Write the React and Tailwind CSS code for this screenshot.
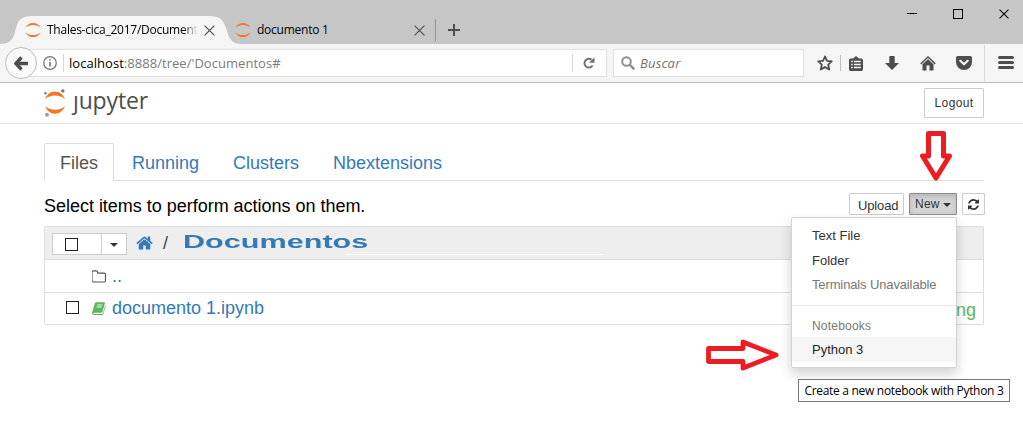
import React from "react";

const ui = "font-['Open_Sans','Noto_Sans',sans-serif]";

function Moons({ className }) {
  return (
    <svg className={className} viewBox="0 0 16 16">
      <path d="M0.6 5.6C2 2.4 4.8.9 8 .9s6 1.5 7.4 4.7C13.600 3.900 11 3 8 3S2.400 3.900.6 5.600z" fill="#f37726" />
      <path d="M0.600 10.400C2 13.600 4.800 15.100 8 15.100s6-1.500 7.400-4.700C13.600 12.100 11 13 8 13s-5.600-.9-7.400-2.600z" fill="#f37726" />
    </svg>
  );
}

function Cross({ className, color = "#4d4d4d" }) {
  return (
    <svg className={className} viewBox="0 0 11 11">
      <path d="M.6.6l9.800 9.800M10.400.6L.6 10.400" stroke={color} strokeWidth="1.150" />
    </svg>
  );
}

function TitleBar() {
  return (
    <div className="flex h-[44px] bg-[#c6c6c6]">
      <div className="relative mt-[16px] flex h-[28px] w-[226px] shrink-0 items-center pl-[25px]">
        <svg className="absolute left-0 top-0 h-[28px] w-[241px]" viewBox="0 0 241 28">
          <path d="M0 28c9 0 13-4 15-12C17.500 5 20 0 32 0h178c11 0 14 5 17 15 2.500 9 6 13 14 13z" fill="#f5f5f5" />
        </svg>
        <Moons className="relative h-[16px] w-[16px] shrink-0" />
        <span className={`relative ml-[6px] w-[151px] whitespace-nowrap text-[12px] tracking-[-0.25px] text-black ${ui} [mask-image:linear-gradient(to_right,black_90%,transparent)]`}>
          Thales-cica_2017/Document
        </span>
        <Cross className="relative ml-[6px] h-[11px] w-[11px] shrink-0" />
      </div>
      <div className="relative mt-[16px] flex h-[28px] w-[209px] items-center pl-[9px]">
        <Moons className="h-[16px] w-[16px]" />
        <span className={`ml-[6px] flex-1 text-[12px] tracking-[-0.25px] text-black ${ui}`}>documento 1</span>
        <Cross className="mr-[10px] h-[11px] w-[11px]" />
      </div>
      <div className="mt-[19px] h-[22px] w-px bg-[#969696]" />
      <svg className="ml-[12px] mt-[24px] h-[12px] w-[12px]" viewBox="0 0 12 12">
        <path d="M6 0v12M0 6h12" stroke="#4d4d4d" strokeWidth="2" />
      </svg>
      <div className="ml-auto mr-[14px] mt-[9px] flex h-[10px] gap-[36px]">
        <div className="mt-[4px] h-px w-[10px] bg-black" />
        <div className="h-[10px] w-[10px] border border-black" />
        <Cross className="h-[10px] w-[10px]" color="#000" />
      </div>
    </div>
  );
}

function Toolbar() {
  return (
    <div className="flex h-[39px] items-start border-b border-[#bdbdbd] bg-[#f5f5f5] pt-[5px]">
      <div className="relative z-10 ml-[5px] mt-[-2px] flex h-[32px] w-[32px] shrink-0 items-center justify-center rounded-full border border-[#bdbdbd] bg-[#fafafa]">
        <svg className="h-[15px] w-[15px]" viewBox="0 0 15 15">
          <path d="M7.500 1.500L1.800 7.500l5.700 6M2.500 7.500H14" fill="none" stroke="#4d4d4d" strokeWidth="3.400" />
        </svg>
      </div>
      <div className="ml-[-12px] flex h-[28px] w-[582px] items-center border border-[#e0e0e0] bg-white pl-[17px]">
        <svg className="h-[14px] w-[14px]" viewBox="0 0 14 14">
          <circle cx="7" cy="7" r="6.300" fill="none" stroke="#737373" strokeWidth="1.200" />
          <path d="M7 6v4.500M7 3.200v1.600" stroke="#737373" strokeWidth="1.600" />
        </svg>
        <div className="ml-[6px] h-[18px] w-px bg-[#d8d8d8]" />
        <span className={`ml-[5px] mt-[2px] whitespace-nowrap text-[13px] tracking-[0.04px] text-[#7b7b7b] ${ui}`}>
          <span className="text-black">localhost</span>:8888/tree/'Documentos#
        </span>
        <div className="ml-auto h-[18px] w-px bg-[#d8d8d8]" />
        <svg className="ml-[10px] mr-[11px] h-[12px] w-[12px]" viewBox="0 0 12 12">
          <path d="M9.600 8.500A4.400 4.400 0 1 1 8.600 2.700" fill="none" stroke="#737373" strokeWidth="2" />
          <path d="M11.500.3v5.500H6z" fill="#737373" />
        </svg>
      </div>
      <div className="ml-[6px] flex h-[28px] w-[191px] items-center border border-[#e0e0e0] bg-white pl-[7px]">
        <svg className="h-[14px] w-[14px]" viewBox="0 0 14 14">
          <circle cx="5.500" cy="5.500" r="4.300" fill="none" stroke="#8c8c8c" strokeWidth="1.900" />
          <path d="M8.500 8.500l4.800 4.800" stroke="#8c8c8c" strokeWidth="2.400" />
        </svg>
        <span className={`ml-[5px] mt-[2px] text-[13px] italic tracking-[0.2px] text-[#737373] ${ui}`}>Buscar</span>
      </div>
      <div className="flex h-[28px] items-center pl-[13px]">
        <svg className="h-[16px] w-[16px]" viewBox="0 0 16 16">
          <path d="M8 1.500l2 4.400 4.700.5-3.500 3.300 1 4.800L8 12.100l-4.200 2.400 1-4.800L1.300 6.400 6 5.900z" fill="none" stroke="#4d4d4d" strokeWidth="1.800" strokeLinejoin="round" />
        </svg>
        <div className="ml-[7px] h-[16px] w-px bg-[#bdbdbd]" />
        <svg className="ml-[8px] h-[15px] w-[14px]" viewBox="0 0 14 15">
          <path d="M4 2.500L7 0l3 2.500h2.200A1.800 1.800 0 0 1 14 4.300v8.900a1.800 1.800 0 0 1-1.800 1.800H1.800A1.800 1.800 0 0 1 0 13.200V4.300a1.800 1.800 0 0 1 1.800-1.800z" fill="#4d4d4d" />
          <path d="M2.200 5.600h1.600M5 5.600h6.800M2.200 8.600h1.600M5 8.600h6.800M2.200 11.600h1.600M5 11.600h6.800" stroke="#f5f5f5" strokeWidth="1.500" />
        </svg>
        <svg className="ml-[22px] h-[14px] w-[14px]" viewBox="0 0 14 14">
          <path d="M4.300.8Q4.300 0 5 0h4q.7 0 .7.800V7H14l-7 7-7-7h4.300z" fill="#4d4d4d" />
        </svg>
        <svg className="ml-[21px] h-[15px] w-[16px]" viewBox="0 0 16 15">
          <path d="M.7 8L8 1l7.300 7" fill="none" stroke="#4d4d4d" strokeWidth="1.500" />
          <path d="M2.500 8.300L8 3.200l5.500 5.100V14.500H9.500V9.500h-3v5h-4z" fill="#4d4d4d" />
        </svg>
        <svg className="ml-[20px] h-[14px] w-[16px]" viewBox="0 0 16 14">
          <path d="M1.800 0h12.400A1.800 1.800 0 0 1 16 1.800V6a8 8 0 0 1-16 0V1.800A1.800 1.800 0 0 1 1.800 0z" fill="#4d4d4d" />
          <path d="M4.300 4.800L8 8.300l3.700-3.500" fill="none" stroke="#f5f5f5" strokeWidth="2.200" strokeLinecap="round" strokeLinejoin="round" />
        </svg>
      </div>
      <div className="ml-[12px] mt-[-4px] h-[36px] w-px bg-[#d9d9d9]" />
      <div className="ml-[13px] mt-[7px] flex flex-col gap-[2px]">
        <div className="h-[3px] w-[16px] rounded-full bg-[#4d4d4d]" />
        <div className="h-[3px] w-[16px] rounded-full bg-[#4d4d4d]" />
        <div className="h-[3px] w-[16px] rounded-full bg-[#4d4d4d]" />
      </div>
    </div>
  );
}

function Header() {
  return (
    <div className="flex h-[41px] items-start border-b border-[#e7e7e7] pl-[44px]">
      <svg className="mt-[6px] h-[28px] w-[22px]" viewBox="0 0 22 28">
        <path d="M1 10.300C2.700 5.600 6.400 2.600 11 2.600s8.300 3 10 7.700C18.500 7.700 15 6.600 11 6.600S3.500 7.700 1 10.300z" fill="#f37726" />
        <path d="M1 17.100c1.700 4.700 5.400 7.700 10 7.700s8.300-3 10-7.700c-2.500 2.600-6 3.700-10 3.700s-7.500-1.100-10-3.700z" fill="#f37726" />
        <circle cx="18.800" cy="1.900" r="1.700" fill="#767677" />
        <circle cx="1.500" cy="4.200" r="1.200" fill="#767677" />
        <circle cx="3" cy="25.700" r="2" fill="#9e9e9e" />
      </svg>
      <div className={`ml-[7px] mt-px text-[23px] leading-[32px] tracking-[-0.15px] text-[#4e4e4e] ${ui}`}>
        <span className="inline-block [clip-path:inset(12px_-6px_-6px_-6px)]">j</span>upyter
      </div>
      <div className="ml-auto mr-[39px] mt-[5px] flex h-[30px] w-[60px] items-center justify-center rounded-[1px] border border-[#ccc] text-[12px] tracking-[0.35px] text-[#333]">
        Logout
      </div>
    </div>
  );
}

function Tabs() {
  return (
    <div className="flex h-[38px] text-[18px] leading-[38px] text-[#337ab7]">
      <div className="w-[70px] rounded-t-[2px] border border-b-0 border-[#ddd] pl-[15px] text-[#555]">Files</div>
      <div className="flex flex-1 border-b border-[#ddd] pl-[18px] pt-px">
        <span className="w-[101px]">Running</span>
        <span className="w-[100px]">Clusters</span>
        <span>Nbextensions</span>
      </div>
    </div>
  );
}

function Caret({ className }) {
  return (
    <svg className={className} viewBox="0 0 8 4">
      <path d="M0 0h8L4 4z" fill="#333" />
    </svg>
  );
}

function Menu() {
  return (
    <div className="absolute left-[-118px] top-[24px] z-20 h-[151px] w-[166px] rounded-[2px] border border-[#d3d3d3] bg-white pt-[5px] text-[13px] leading-[25px] text-[#333] shadow-[0_6px_12px_rgba(0,0,0,0.18)]">
      <div className="h-[25px] pl-[20px]">Text File</div>
      <div className="h-[25px] pl-[20px]">Folder</div>
      <div className="h-[24px] whitespace-nowrap pl-[20px] leading-[24px] tracking-[-0.13px] text-[#777]">Terminals Unavailable</div>
      <div className="mt-[8px] h-px bg-[#e5e5e5]" />
      <div className="mt-[8px] h-[23px] pl-[20px] text-[12px] leading-[24px] tracking-[0.2px] text-[#777]">Notebooks</div>
      <div className="h-[25px] bg-[#f5f5f5] pl-[20px] text-[#262626]">Python 3</div>
      <div className={`absolute left-[6px] top-[161px] flex h-[23px] w-[212px] items-center justify-center whitespace-nowrap border border-[#767676] bg-white text-[12px] tracking-[-0.3px] text-black ${ui}`}>
        Create a new notebook with Python 3
      </div>
    </div>
  );
}

function Actions() {
  return (
    <div className="flex h-[45px] items-start pt-[12px]">
      <div className="mt-[1px] flex-1 text-[18px] leading-[24px] tracking-[-0.02px] text-black">Select items to perform actions on them.</div>
      <div className="mr-[-1px] flex gap-[5px] text-[12px] text-[#333]">
        <div className="flex h-[22px] w-[55px] items-center rounded-[1px] border border-[#ccc] pl-[8px] pt-[3px] text-[13px] leading-none tracking-[-0.15px]">Upload</div>
        <div className="relative">
          <div className="flex h-[22px] w-[48px] items-center rounded-[1px] border border-[#8c8c8c] bg-[#d4d4d4] pl-[5px] tracking-[0.25px] shadow-[inset_0_3px_5px_rgba(0,0,0,0.125)]">
            New
            <Caret className="ml-[3px] mt-[2px] h-[4px] w-[8px]" />
          </div>
          <Menu />
        </div>
        <div className="flex h-[22px] w-[23px] items-center justify-center rounded-[1px] border border-[#ccc]">
          <svg className="h-[13px] w-[11px]" viewBox="0 0 1536 1792">
            <path fill="#333" d="M1511 1056q0 5-1 7-64 268-268 434.500t-478 166.500q-146 0-282.500-55t-243.500-157l-129 129q-19 19-45 19t-45-19-19-45v-448q0-26 19-45t45-19h448q26 0 45 19t19 45-19 45l-137 137q71 66 161 102t187 36q134 0 250-65t186-179q11-17 53-117 8-23 30-23h192q13 0 22.500 9.500t9.500 22.500zm25-800v448q0 26-19 45t-45 19h-448q-26 0-45-19t-19-45 19-45l138-138q-148-137-349-137-134 0-250 65t-186 179q-11 17-53 117-8 23-30 23h-199q-13 0-22.500-9.500t-9.500-22.500v-7q65-268 270-434.500t480-166.500q146 0 284 55.500t245 156.500l130-129q19-19 45-19t45 19 19 45z" />
          </svg>
        </div>
      </div>
    </div>
  );
}

function FileList() {
  return (
    <div className="rounded-[2px] border border-[#ddd] text-[18px] text-[#337ab7]">
      <div className="relative flex h-[33px] items-center border-b border-[#ddd] bg-[#eee] pl-[7px]">
        <div className="mt-[2px] flex h-[22px] w-[75px] border border-[#ccc] bg-white">
          <div className="flex w-[49px] items-center border-r border-[#ccc] pl-[12px]">
            <div className="h-[13px] w-[13px] border border-[#222]" />
          </div>
          <Caret className="ml-[8px] mt-[9px] h-[4px] w-[8px]" />
        </div>
        <svg className="ml-[9px] h-[18px] w-[17px]" viewBox="0 0 1664 1792">
          <path fill="#337ab7" d="M1408 992v480q0 26-19 45t-45 19h-384v-384h-256v384h-384q-26 0-45-19t-19-45v-480q0-1 .5-3t.5-3l575-474 575 474q1 2 1 6zm223-69l-62 74q-8 9-21 11h-3q-13 0-21-7l-692-577-692 577q-12 8-24 7-13-2-21-11l-62-74q-8-10-7-23.500t11-21.500l719-599q32-26 76-26t76 26l244 204v-195q0-14 9-23t23-9h192q14 0 23 9t9 23v408l219 182q10 8 11 21.500t-7 23.500z" />
        </svg>
        <span className="ml-[10px] text-[#444]">/</span>
        <span className="ml-[15px] mt-[-2px] origin-left scale-x-[1.7] font-bold">Documentos</span>
        <div className="absolute left-[301px] top-[27px] h-px w-[257px] bg-white" />
      </div>
      <div className="flex h-[33px] items-center border-b border-[#ddd] pl-[47px]">
        <svg className="mt-px h-[16px] w-[14px]" viewBox="0 0 1600 1792">
          <path fill="#555" d="M1472 1312v-704q0-40-28-68t-68-28h-704q-40 0-68-28t-28-68v-64q0-40-28-68t-68-28h-320q-40 0-68 28t-28 68v960q0 40 28 68t68 28h1216q40 0 68-28t28-68zm128-704v704q0 92-66 158t-158 66h-1216q-92 0-158-66t-66-158v-960q0-92 66-158t158-66h320q92 0 158 66t66 158v32h672q92 0 158 66t66 158z" />
        </svg>
        <span className="ml-[6px]">..</span>
      </div>
      <div className="flex h-[31px] items-center pl-[21px] pr-[7px]">
        <div className="mt-[-3px] h-[13px] w-[13px] border border-[#222]" />
        <svg className="ml-[13px] h-[13px] w-[14px]" viewBox="0 0 14 13">
          <path d="M4.500.3h7.700q1 0 .7 1L10.500 9.800q-.3.900-1.300.9H2q-.7 0-.6.700.1.600.9.600h7.800q.6 0 .8-.6L13.300 3q.6.300.4 1.100L11.400 12q-.3 1-1.300 1H1.900Q.1 13 0 11.200 0 10.500.3 9.800L2.800 1.500Q3.200.3 4.500.3z" fill="#5cb85c" />
          <path d="M5.300 3h5M4.700 5h5" stroke="#fff" strokeWidth=".9" />
        </svg>
        <span className="ml-[6px] flex-1">documento 1.ipynb</span>
        <span className="mt-[4px] text-[#5cb85c]">Running</span>
      </div>
    </div>
  );
}

export default function App() {
  return (
    <div className="relative h-[423px] w-[1023px] overflow-hidden bg-white font-['Liberation_Sans',Arial,sans-serif]">
      <TitleBar />
      <Toolbar />
      <Header />
      <main className="ml-[44px] mt-[19px] w-[940px]">
        <Tabs />
        <Actions />
        <FileList />
      </main>
      <svg className="absolute left-[918px] top-[130px] h-[52px] w-[36px]" viewBox="0 0 36 52">
        <path d="M10.500 3.500h15V26h6L18 48 4.500 26h6z" fill="#fff" stroke="#ed1c24" strokeWidth="5" strokeLinejoin="round" />
      </svg>
      <svg className="absolute left-[704px] top-[337px] h-[36px] w-[76px]" viewBox="0 0 76 36">
        <path d="M4.500 11.500H39V5l33 13-33 13v-6.500H4.500z" fill="#fff" stroke="#ed1c24" strokeWidth="4.800" strokeLinejoin="round" />
      </svg>
    </div>
  );
}
